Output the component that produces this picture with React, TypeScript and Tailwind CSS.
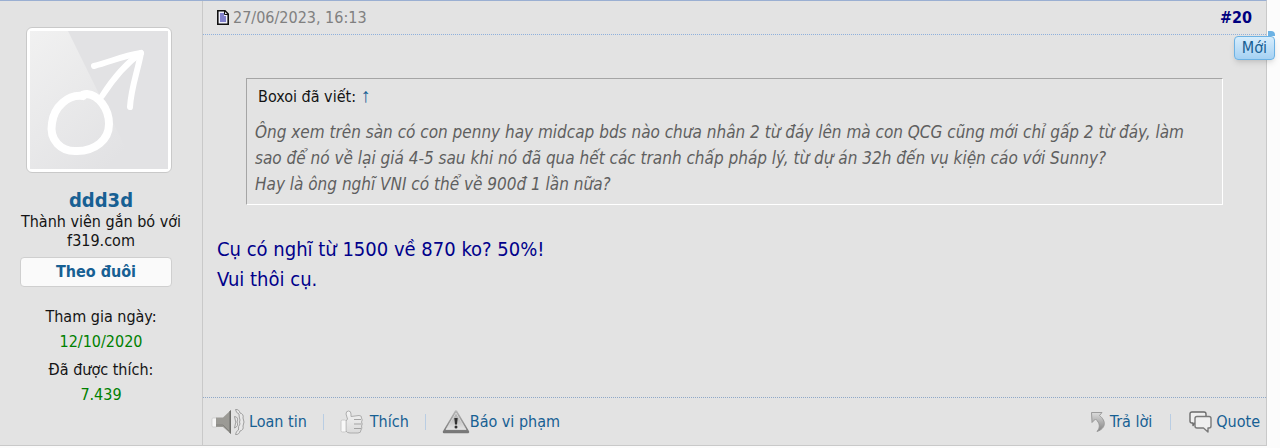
import { ReactNode } from "react";
import clsx from "clsx";

function MaleAvatar() {
  return (
    <svg viewBox="0 0 138 138" className="block w-full" role="img" aria-label="ddd3d">
      <defs>
        <linearGradient id="shine" x1="0" y1="0" x2="0.7" y2="1">
          <stop offset="0" stopColor="#f1f1f1" />
          <stop offset="1" stopColor="#e2e2e4" />
        </linearGradient>
      </defs>
      <rect width="138" height="138" fill="#e2e2e4" />
      <path d="M0 0H38L106 138H0Z" fill="url(#shine)" />
      <g fill="none" stroke="#fff" strokeLinecap="round" strokeLinejoin="round">
        <path
          strokeWidth="8"
          d="M53 65C38 63 24 76 22 92C19 109 31 121 47 120C65 120 79 109 79 93C79 77 68 64 57 63C54 63 51 64 53 65"
        />
        <path strokeWidth="6" d="M72 65C81 51 95 33 111 22" />
        <path strokeWidth="6" d="M64 35C80 31 95 24 111 22C108 39 101 57 100 76" />
      </g>
    </svg>
  );
}

function DocumentIcon() {
  return (
    <svg viewBox="0 0 12 15" className="h-[15px] w-3 shrink-0" aria-hidden="true">
      <path d="M.8 .8H8L11.200 4V14.200H.8Z" fill="#f0f0fa" stroke="#111" strokeWidth="1.600" />
      <path d="M3 3H7V6H9V12H3Z" fill="#8080cc" />
      <path d="M7.500 1V4.500H11" fill="none" stroke="#111" />
    </svg>
  );
}

function SpeakerIcon() {
  return (
    <svg viewBox="0 0 34 28" className="h-7 w-[34px]" aria-hidden="true">
      <rect x="1" y="10" width="5" height="9" rx="1" fill="#f7f7f7" stroke="#c4c4c4" strokeWidth=".7" />
      <path d="M5 9.500H12L20 2V26L12 19H5Z" fill="#9b9a95" />
      <path d="M18.500 3.500L20 2V26L18.500 24.500Z" fill="#6d6d6a" />
      <path d="M5 17H12L19 24" fill="none" stroke="#83827e" />
      <g fill="#e8e8e8" stroke="#969696" strokeWidth=".9">
        <path d="M23.500 8.500Q28 9 26 14Q28 18 23.500 20Q26 14 23.500 8.500Z" />
        <path d="M24.500 1.500Q28 1 29 5Q33 6 32 10Q34 14 32 18Q33 22 29 23Q28 27 24.500 26.500Q25 23 27.500 22Q27 18 29 16Q28 14 29 12Q28 9 28 6Q25 5 24.500 1.500Z" />
      </g>
    </svg>
  );
}

function ThumbIcon() {
  return (
    <svg viewBox="0 0 24 24" className="h-6 w-6" aria-hidden="true">
      <defs>
        <linearGradient id="thumb" x1="0" y1="0" x2="0" y2="1">
          <stop offset="0" stopColor="#f4f4f4" />
          <stop offset="1" stopColor="#dadada" />
        </linearGradient>
      </defs>
      <path
        d="M6 11L7.500 9L6 4Q6 1 8.500 1Q11 1 11 4V6.500L19 5.500Q22 5.500 21.500 8Q23 10 21.500 12Q23 14 21.500 16Q22.500 18 21 20Q21 23 18 23H10Q7 23 6 21Z"
        fill="url(#thumb)"
        stroke="#adadad"
      />
      <path d="M14 9.500H21M14 14H21.500M14 18.500H21" stroke="#a3a3a3" fill="none" />
      <rect x="1" y="10" width="5" height="12" rx="1.500" fill="#f8f8f8" stroke="#c9c9c9" />
    </svg>
  );
}

function WarningIcon() {
  return (
    <svg viewBox="0 0 28 26" className="h-[26px] w-7" aria-hidden="true">
      <defs>
        <linearGradient id="warn" x1="0" y1="0" x2="0" y2="1">
          <stop offset="0" stopColor="#b4b4b4" />
          <stop offset="1" stopColor="#777" />
        </linearGradient>
        <linearGradient id="warnFace" x1="0" y1="0" x2="0" y2="1">
          <stop offset="0" stopColor="#aaa" />
          <stop offset="1" stopColor="#e4e4e4" />
        </linearGradient>
      </defs>
      <path d="M14 2.500L26 23H2Z" fill="url(#warn)" stroke="url(#warn)" strokeWidth="2.500" strokeLinejoin="round" />
      <path d="M14 4L24 20.500H4Z" fill="url(#warnFace)" stroke="#e0e0e0" strokeWidth=".8" />
      <path d="M12.300 9H15.700L15 15.500H13Z" fill="#333" />
      <circle cx="14" cy="18" r="1.500" fill="#333" />
    </svg>
  );
}

function ReplyIcon() {
  return (
    <svg viewBox="0 0 16 22" className="h-[22px] w-4" aria-hidden="true">
      <defs>
        <linearGradient id="reply" x1="0" y1="0" x2="0" y2="1">
          <stop offset="0" stopColor="#dcdcdc" />
          <stop offset="1" stopColor="#828282" />
        </linearGradient>
      </defs>
      <path
        d="M1.500 1.500L12 1.500L9.500 4.500C16.500 10 16 17.500 7 20.500C10.500 16.500 10 12 5.500 8L2 11.500Z"
        fill="url(#reply)"
        stroke="#949494"
        strokeWidth=".9"
      />
    </svg>
  );
}

function QuoteIcon() {
  return (
    <svg viewBox="0 0 23 22" className="h-[22px] w-[23px]" aria-hidden="true">
      <g fill="#efefef" strokeLinejoin="round" strokeWidth="1.400">
        <path d="M3 1H15Q17 1 17 3V10Q17 12 15 12H6L4 14.500V12H3Q1 12 1 10V3Q1 1 3 1Z" stroke="#6b6b6b" />
        <path d="M8 5.500H20Q22 5.500 22 7.500V15Q22 17 20 17H19V21L14.500 17H8Q6 17 6 15V7.500Q6 5.500 8 5.500Z" stroke="#7a7a7a" />
      </g>
    </svg>
  );
}

function Separator() {
  return <span className="h-4 w-px bg-[#b9cde3]" />;
}

function ActionLink({ icon, label, className }: { icon: ReactNode; label: string; className?: string }) {
  return (
    <a href="#" className={clsx("flex items-center text-[#176093]", className)}>
      {icon}
      {label}
    </a>
  );
}

function UserInfo() {
  return (
    <aside className="flex w-[203px] shrink-0 flex-col items-center border-r border-[#c9c9c9] pt-[26px] text-center">
      <div className="mr-1 w-[146px] overflow-hidden rounded-md border border-[#c9c9c9] bg-white p-[3px]">
        <MaleAvatar />
      </div>
      <a href="#" className="mt-[15px] text-xl leading-6 font-bold text-[#176093]">
        ddd3d
      </a>
      <p className="w-[170px] leading-[19px]">Thành viên gắn bó với f319.com</p>
      <button
        type="button"
        className="mt-[7px] mr-[10px] h-[30px] w-[152px] rounded border border-[#cfcfcf] bg-[#fafafa] font-bold text-[#176093]"
      >
        Theo đuôi
      </button>
      <dl className="mt-[17px] flex flex-col gap-[3px]">
        <div>
          <dt className="leading-[26px]">Tham gia ngày:</dt>
          <dd className="leading-6 text-[#008000]">12/10/2020</dd>
        </div>
        <div>
          <dt className="leading-[26px]">Đã được thích:</dt>
          <dd className="leading-6 text-[#008000]">7.439</dd>
        </div>
      </dl>
    </aside>
  );
}

export default function App() {
  return (
    <div className="min-h-screen bg-[#fcfcfc] pr-[13px] font-['DejaVu_Sans_Condensed','DejaVu_Sans',sans-serif] text-base text-[#141414]">
      <article className="relative flex border-t border-r border-b border-t-[#9aafd2] border-r-[#c9c9c9] border-b-[#c9c9c9] bg-[#e3e3e3]">
        <UserInfo />

        <div className="flex min-w-0 flex-1 flex-col">
          <header className="flex h-[34px] items-center justify-between border-b border-dotted border-[#8fb0dc] px-[14px]">
            <a href="#" className="flex items-center gap-1 text-[#808080]">
              <DocumentIcon />
              27/06/2023, 16:13
            </a>
            <a href="#" className="font-bold text-[#00007f]">
              #20
            </a>
          </header>

          <div className="px-[43px] pt-[43px]">
            <blockquote className="border border-t-[#a5a5a5] border-r-white border-b-white border-l-[#a5a5a5] px-2 pt-1 pb-[7px]">
              <div className="px-[3px] leading-7">
                Boxoi đã viết:{" "}
                <a href="#" className="font-['Liberation_Serif',serif] text-xl leading-4 text-[#176093]">
                  ↑
                </a>
              </div>
              <div className="mt-2 text-[17px] leading-[26px] text-[#5f5f5f] italic">
                <p>
                  Ông xem trên sàn có con penny hay midcap bds nào chưa nhân 2 từ đáy lên mà con QCG cũng mới chỉ gấp 2
                  từ đáy, làm sao để nó về lại giá 4-5 sau khi nó đã qua hết các tranh chấp pháp lý, từ dự án 32h đến vụ
                  kiện cáo với Sunny?
                </p>
                <p>Hay là ông nghĩ VNI có thể về 900đ 1 lần nữa?</p>
              </div>
            </blockquote>
          </div>
          <div className="px-[14px] pt-[29px] pb-[103px] text-xl leading-[30px] text-[#00008b]">
            <p>Cụ có nghĩ từ 1500 về 870 ko? 50%!</p>
            <p>Vui thôi cụ.</p>
          </div>

          <footer className="flex h-12 items-center justify-between border-t border-dotted border-[#8fa8c8] pr-[6px] pl-2">
            <div className="flex items-center gap-4">
              <ActionLink icon={<SpeakerIcon />} label="Loan tin" className="gap-1" />
              <Separator />
              <ActionLink icon={<ThumbIcon />} label="Thích" className="gap-[6px]" />
              <Separator />
              <ActionLink icon={<WarningIcon />} label="Báo vi phạm" />
            </div>
            <div className="flex items-center gap-[18px]">
              <ActionLink icon={<ReplyIcon />} label="Trả lời" className="gap-1" />
              <Separator />
              <ActionLink icon={<QuoteIcon />} label="Quote" className="gap-1" />
            </div>
          </footer>
        </div>

        <strong className="absolute top-[35px] -right-[9px] rounded border border-[#6cb2e4] bg-linear-to-b from-[#d7edfc] to-[#a5d1f3] px-[7px] leading-[22px] font-normal text-[#176093] shadow-md">
          Mới
          <span className="absolute -top-[6px] -right-px h-[5px] w-[7px] rounded-tr bg-[#6cb2e4]" />
        </strong>
      </article>
    </div>
  );
}
